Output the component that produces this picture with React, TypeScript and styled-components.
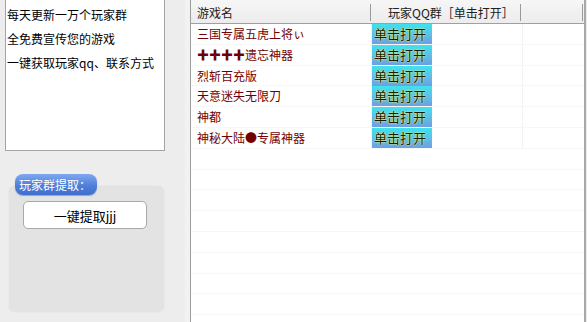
import styled, { createGlobalStyle } from 'styled-components'

const GlobalStyle = createGlobalStyle`
  html, body {
    margin: 0;
    padding: 0;
    background: #ededed;
  }
  body {
    font-family: "Noto Sans CJK SC", "Liberation Sans", sans-serif;
    font-size: 12px;
  }
`

const games = [
  '三国专属五虎上将ぃ',
  '✚✚✚✚遗忘神器',
  '烈斩百充版',
  '天意迷失无限刀',
  '神都',
  '神秘大陆●专属神器',
]

const notes = ['每天更新一万个玩家群', '全免费宣传您的游戏', '一键获取玩家qq、联系方式']

function App(): JSX.Element {
  const empty = Array.from({ length: 8 })
  return (
    <>
      <GlobalStyle />
      <Window>
        <Side>
          <NoteBox>
            {notes.map((n) => (
              <NoteLine key={n}>{n}</NoteLine>
            ))}
          </NoteBox>
          <Group>
            <GroupLabel>玩家群提取：</GroupLabel>
            <PlainButton type="button">一键提取jjj</PlainButton>
          </Group>
        </Side>
        <Splitter />
        <List>
          <HeaderRow>
            <HeadCell $w={180}>游戏名</HeadCell>
            <HeadCell $w={150} $pad={17}>
              玩家QQ群［单击打开］
            </HeadCell>
            <HeadCell $w={62} />
          </HeaderRow>
          {games.map((g) => (
            <Row key={g}>
              <NameCell>{g}</NameCell>
              <LinkCell>
                <OpenButton>单击打开</OpenButton>
              </LinkCell>
            </Row>
          ))}
          {empty.map((_, i) => (
            <Row key={i} />
          ))}
        </List>
      </Window>
    </>
  )
}

const Window = styled.div`
  display: flex;
  width: 587px;
  height: 322px;
  overflow: hidden;
  background: #ededed;
`

const Side = styled.div`
  width: 185px;
  flex: none;
  display: flex;
  flex-direction: column;
  padding-left: 5px;
  box-sizing: border-box;
`

const NoteBox = styled.div`
  width: 160px;
  height: 153px;
  margin-top: -2px;
  box-sizing: border-box;
  background: #ffffff;
  border: 1px solid #a4a4a4;
  padding: 8px 0 0 1px;
`

const NoteLine = styled.div`
  height: 24px;
  line-height: 15px;
  color: #000000;
  white-space: nowrap;
`

const Group = styled.div`
  position: relative;
  margin: 34px 0 0 3px;
  width: 157px;
  height: 128px;
  box-sizing: border-box;
  background: #e3e3e3;
  border: 1px solid #e9e9e9;
  border-radius: 7px;
  padding: 15px 0 0 14px;
`

const GroupLabel = styled.div`
  position: absolute;
  left: 6px;
  top: -12px;
  height: 21px;
  padding: 0 6px 0 4px;
  line-height: 21px;
  border-radius: 8px;
  color: #ffffff;
  font-size: 12px;
  background: linear-gradient(to bottom, #7fa8ef, #4f7fd8 55%, #3e6fcf);
  box-shadow: 0 1px 1px rgba(40, 70, 140, 0.4);
`

const PlainButton = styled.button`
  width: 124px;
  height: 28px;
  background: #ffffff;
  border: 1px solid #a9a9a9;
  border-radius: 5px;
  font: inherit;
  font-size: 13px;
  color: #000000;
  padding: 0;
`

const Splitter = styled.div`
  width: 5px;
  flex: none;
  background: #f2f2f2;
  border-right: 1px solid #9c9c9c;
`

const List = styled.div`
  flex: 1;
  background: #ffffff;
  border-right: 2px solid #a8a8a8;
  margin-right: 1px;
`

const HeaderRow = styled.div`
  display: flex;
  height: 24px;
  background: linear-gradient(to bottom, #f6f6f6, #ececec);
  border-bottom: 1px solid #a0a0a0;
  box-sizing: border-box;
`

const HeadCell = styled.div<{ $w: number; $pad?: number }>`
  width: ${(p) => p.$w}px;
  flex: none;
  box-sizing: border-box;
  padding-left: ${(p) => p.$pad ?? 6}px;
  line-height: 24px;
  color: #202020;
  border-right: 1px solid #9a9a9a;
  height: 17px;
  margin-top: 4px;
  display: flex;
  align-items: center;
  white-space: nowrap;
`

const Row = styled.div`
  display: flex;
  height: 20.8px;
  border-bottom: 1px solid #f7f7f7;
  box-sizing: border-box;
`

const NameCell = styled.div`
  width: 181px;
  flex: none;
  box-sizing: border-box;
  padding-left: 6px;
  color: #730000;
  line-height: 20px;
  white-space: nowrap;
  border-right: 1px solid #f3f3f3;
`

const LinkCell = styled.div`
  width: 150px;
  flex: none;
  border-right: 1px solid #f3f3f3;
`

const OpenButton = styled.div`
  width: 60px;
  height: 20px;
  box-sizing: border-box;
  padding-left: 2px;
  background: linear-gradient(to bottom, #3fe2ee, #5cc0ea 50%, #6d9fe2);
  color: #1a1a00;
  font-size: 13px;
  line-height: 20px;
  white-space: nowrap;
  text-shadow: 0 0 2px #f6ff7a, 0 0 1px #f6ff7a;
`

export default App
